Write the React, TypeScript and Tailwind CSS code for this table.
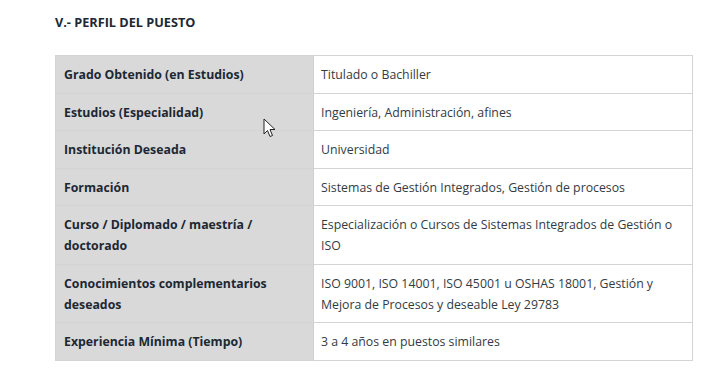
import React from "react";

const rows: [string, string][] = [
  ["Grado Obtenido (en Estudios)", "Titulado o Bachiller"],
  ["Estudios (Especialidad)", "Ingeniería, Administración, afines"],
  ["Institución Deseada", "Universidad"],
  ["Formación", "Sistemas de Gestión Integrados, Gestión de procesos"],
  ["Curso / Diplomado / maestría / doctorado", "Especialización o Cursos de Sistemas Integrados de Gestión o ISO"],
  ["Conocimientos complementarios deseados", "ISO 9001, ISO 14001, ISO 45001 u OSHAS 18001, Gestión y Mejora de Procesos y deseable Ley 29783"],
  ["Experiencia Mínima (Tiempo)", "3 a 4 años en puestos similares"],
];

export default function App() {
  return (
    <div
      className="relative w-[715px] h-[375px] bg-white text-[12.3px] leading-[21px] text-[#1c2833]"
      style={{ fontFamily: '"Open Sans", "Noto Sans", sans-serif' }}
    >
      <div className="pl-[55px] pt-[12px]">
        <h2 className="font-bold text-[12.7px] leading-[20px] text-[#1c2833]">V.- PERFIL DEL PUESTO</h2>
        <table className="mt-[23px] w-[638px] border-collapse border border-[#d4d4d4]">
          <tbody>
            {rows.map(([k, v]) => (
              <tr key={k} className="border-b border-[#d4d4d4]">
                <td className="w-[258px] bg-[#d9d9d9] pl-[8px] pr-2 pt-2 pb-[7.5px] align-top font-bold border-r border-[#cfcfcf]">
                  {k}
                </td>
                <td className="pl-[7px] pr-2 pt-2 pb-[7.5px] align-top text-[#333b44]">{v}</td>
              </tr>
            ))}
          </tbody>
        </table>
      </div>
      <svg className="absolute left-[263px] top-[118px]" width="13" height="20" viewBox="0 0 13 20">
        <path d="M1 1 L1 16 L4.5 12.5 L7 18.5 L9.5 17.5 L7 11.5 L12 11.5 Z" fill="white" stroke="#222" strokeWidth="1" strokeLinejoin="round" />
      </svg>
    </div>
  );
}
